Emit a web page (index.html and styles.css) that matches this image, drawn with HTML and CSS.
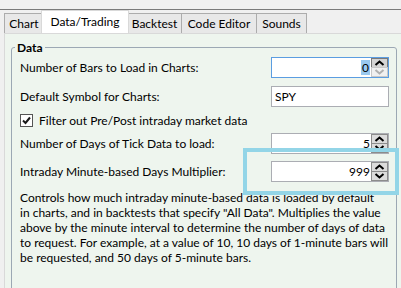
FILE: index.html
```html
<!DOCTYPE html>
<html lang="en">
<head>
    <meta charset="UTF-8">
    <meta name="viewport" content="width=device-width, initial-scale=1.0">
    <title>Preferences - Data/Trading</title>
    <link rel="stylesheet" href="styles.css">
</head>
<body>
    <div class="window">
        <div class="topbar"></div>

        <div class="tabs">
            <div class="tab tab-chart">Chart</div>
            <div class="tab tab-data active">Data/Trading</div>
            <div class="tab tab-backtest">Backtest</div>
            <div class="tab tab-code">Code Editor</div>
            <div class="tab tab-sounds">Sounds</div>
        </div>

        <div class="page">
            <fieldset class="group">
                <legend>Data</legend>

                <div class="row row-bars">
                    <label>Number of Bars to Load in Charts:</label>
                    <div class="spin focused">
                        <span class="value"><span class="sel">0</span></span>
                        <div class="arrows">
                            <div class="arrow up hot">
                                <svg width="11" height="6" viewBox="0 0 11 6"><polyline points="1.5,5 5.5,1.5 9.5,5" /></svg>
                            </div>
                            <div class="arrow down disabled">
                                <svg width="11" height="6" viewBox="0 0 11 6"><polyline points="1.5,1 5.5,4.5 9.5,1" /></svg>
                            </div>
                        </div>
                    </div>
                </div>

                <div class="row row-symbol">
                    <label>Default Symbol for Charts:</label>
                    <div class="textbox">SPY</div>
                </div>

                <div class="row row-check">
                    <span class="checkbox">
                        <svg width="11" height="11" viewBox="0 0 11 11"><polyline points="2,5.5 4.5,8 9,2.5" /></svg>
                    </span>
                    <label>Filter out Pre/Post intraday market data</label>
                </div>

                <div class="row row-tick">
                    <label>Number of Days of Tick Data to load:</label>
                    <div class="spin">
                        <span class="value">5</span>
                        <div class="arrows">
                            <div class="arrow up">
                                <svg width="11" height="6" viewBox="0 0 11 6"><polyline points="1.5,5 5.5,1.5 9.5,5" /></svg>
                            </div>
                            <div class="arrow down">
                                <svg width="11" height="6" viewBox="0 0 11 6"><polyline points="1.5,1 5.5,4.5 9.5,1" /></svg>
                            </div>
                        </div>
                    </div>
                </div>

                <div class="row row-mult">
                    <label>Intraday Minute-based Days Multiplier:</label>
                    <div class="spin">
                        <span class="value">999</span>
                        <div class="arrows">
                            <div class="arrow up">
                                <svg width="11" height="6" viewBox="0 0 11 6"><polyline points="1.5,5 5.5,1.5 9.5,5" /></svg>
                            </div>
                            <div class="arrow down">
                                <svg width="11" height="6" viewBox="0 0 11 6"><polyline points="1.5,1 5.5,4.5 9.5,1" /></svg>
                            </div>
                        </div>
                    </div>
                </div>

                <p class="help">
                    Controls how much intraday minute-based data is loaded by default<br>
                    in charts, and in backtests that specify "All Data". Multiplies the value<br>
                    above by the minute interval to determine the number of days of data<br>
                    to request. For example, at a value of 10, 10 days of 1-minute bars will<br>
                    be requested, and 50 days of 5-minute bars.
                </p>
            </fieldset>

            <div class="highlight"></div>
        </div>
    </div>
</body>
</html>
```

FILE: styles.css
```css
body {
    margin: 0;
    background: #f0f0f0;
    font-family: Lato, 'Liberation Sans', sans-serif;
    font-size: 12px;
    color: #000;
    overflow: hidden;
}
.window {
    width: 401px;
    height: 288px;
    overflow: hidden;
    position: relative;
}
.topbar {
    height: 9px;
    border-bottom: 1px solid #7a7a7a;
}

/* tab strip */
.tabs {
    display: flex;
    align-items: flex-end;
    height: 23px;
    padding-left: 4px;
}
.tab {
    height: 19px;
    line-height: 19px;
    text-align: center;
    box-sizing: content-box;
    background: #e8e8e8;
    border: 1px solid #acacac;
    border-bottom: none;
    margin-right: -1px;
}
.tab-chart { width: 38px; }
.tab-data { width: 86px; }
.tab-backtest { width: 53px; }
.tab-code { width: 74px; }
.tab-sounds { width: 49px; }
.tab.active {
    height: 22px;
    line-height: 21px;
    margin: 0 -2px 0 -2px;
    background: #fff;
    border-color: #d9d9d9;
    position: relative;
    z-index: 1;
}

/* tab page */
.page {
    position: relative;
    height: 260px;
    margin-left: 4px;
    background: #eef5ee;
    border-left: 1px solid #d9d9d9;
    border-top: 1px solid #d9d9d9;
    box-shadow: -4px 0 0 #f0f0f0, -5px 0 0 #a0a0a0;
}
.group {
    margin: 6px 0 0 6px;
    padding: 2px 7px 0 8px;
    height: 300px;
    border: 1px solid #9ca8b4;
    border-radius: 3px;
    box-sizing: border-box;
    width: 386px;
}
.group legend {
    font-weight: bold;
    padding: 0 2px;
    margin-left: -5px;
    line-height: 15px;
}

/* rows */
.row {
    display: flex;
    align-items: center;
    justify-content: space-between;
    height: 21px;
}
.row-symbol { margin-top: 8px; }
.row-check {
    justify-content: flex-start;
    gap: 6px;
    margin-top: 3px;
    height: 20px;
}
.row-tick { margin-top: 3px; }
.row-mult { margin-top: 7px; }

.textbox, .spin {
    width: 118px;
    height: 21px;
    box-sizing: border-box;
    background: #fff;
    border: 1px solid #abadb3;
}
.textbox {
    padding-left: 3px;
    line-height: 19px;
}
.spin {
    display: flex;
}
.spin.focused { border-color: #5b9de1; }
.spin .value {
    flex: 1;
    text-align: right;
    padding-right: 1px;
    line-height: 19px;
}
.spin .sel {
    background: #99c9ef;
    padding: 0 1px;
}
.arrows {
    width: 17px;
    display: flex;
    flex-direction: column;
}
.arrow {
    flex: 1;
    display: flex;
    align-items: center;
    justify-content: center;
    background: #dcdcdc;
    border: 1px solid #8c8c8c;
    margin-bottom: -1px;
}
.arrow:last-child { margin-bottom: 0; }
.arrow svg polyline {
    fill: none;
    stroke: #000;
    stroke-width: 2;
}
.arrow.hot { background: #d4d4d4; border-color: #7a7a7a; }
.arrow.disabled { background: #f0f0f0; border-color: #c8c8c8; }
.arrow.disabled svg polyline { stroke: #b0b0b0; }

.checkbox {
    width: 13px;
    height: 13px;
    box-sizing: border-box;
    border: 1px solid #555;
    background: #fff;
    display: flex;
    align-items: center;
    justify-content: center;
}
.checkbox polyline {
    fill: none;
    stroke: #1a1a1a;
    stroke-width: 2;
}

.help {
    margin: 8px 0 0;
    line-height: 15px;
    white-space: nowrap;
}

/* annotation box */
.highlight {
    position: absolute;
    left: 238px;
    top: 114px;
    width: 148px;
    height: 39px;
    border: 4px solid #93d5e7;
}
```
